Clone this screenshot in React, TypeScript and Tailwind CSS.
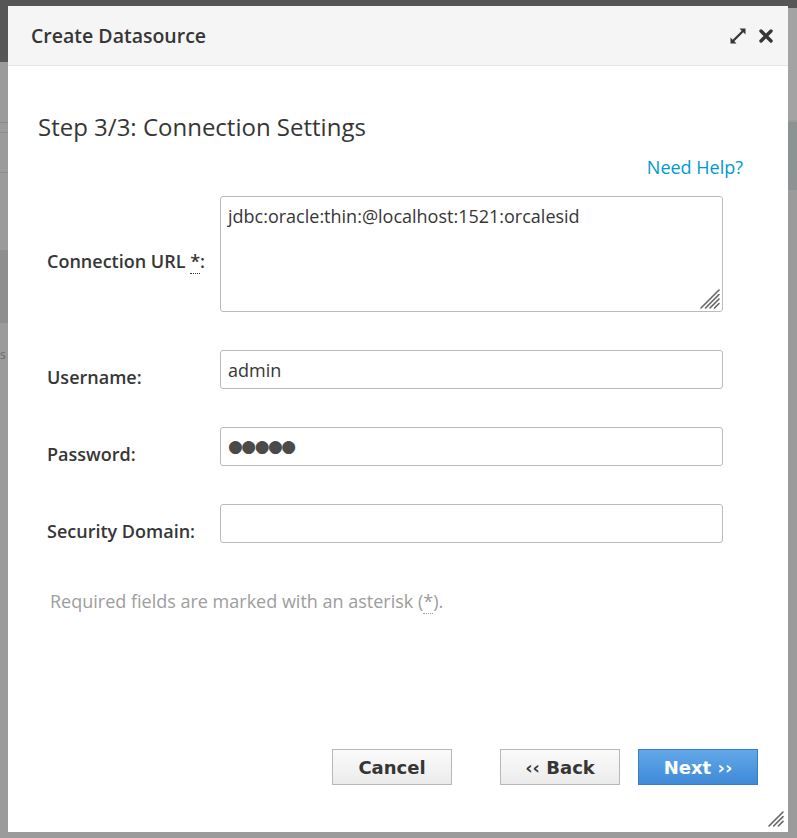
import React from "react";

const FONT = { fontFamily: '"Open Sans", "Liberation Sans", sans-serif' };
const BTN_FONT = { fontFamily: '"DejaVu Sans", Verdana, sans-serif' };

function ExpandIcon() {
  return (
    <svg width="18" height="18" viewBox="0 0 18 18" fill="#363636">
      <path d="M10.5 1.5 H16.5 V7.5 L14.3 5.3 L5.3 14.3 L7.5 16.5 H1.5 V10.5 L3.7 12.7 L12.7 3.7 Z" />
    </svg>
  );
}

function CloseIcon() {
  return (
    <svg width="14" height="14" viewBox="0 0 14 14">
      <path d="M2 2 L12 12 M12 2 L2 12" stroke="#363636" strokeWidth="3.4" strokeLinecap="round" />
    </svg>
  );
}

// diagonal resize grip, lines from bottom edge to right edge
function Grip({ n = 4, size = 20 }: { n?: number; size?: number }) {
  const step = (size - 4) / n;
  const lines = [];
  for (let i = 0; i < n; i++) {
    const o = 2 + i * step;
    lines.push(<path key={i} d={`M${o} ${size - 2} L${size - 2} ${o}`} />);
  }
  return (
    <svg width={size} height={size} viewBox={`0 0 ${size} ${size}`} stroke="#666666" strokeWidth="1.6" strokeLinecap="round" fill="none">
      {lines}
    </svg>
  );
}

function Row({ label, required, children }: { label: string; required?: boolean; children: React.ReactNode }) {
  return (
    <div className="flex items-center">
      <label className="w-[173px] pt-[14px] text-[18px] leading-[24px] font-semibold text-[#363636]">
        {label}
        {required && (
          <>
            {" "}
            <span className="border-b border-dotted border-[#363636] leading-none">*</span>
          </>
        )}
        :
      </label>
      {children}
    </div>
  );
}

const inputCls =
  "w-[503px] h-[39px] rounded-[3px] border border-[#bbbbbb] bg-white px-[7px] text-[18px] text-[#363636] outline-none";

export default function App() {
  return (
    <div className="relative w-[797px] h-[838px] overflow-hidden bg-[#9b9b9b]" style={FONT}>
      {/* dimmed page behind the dialog */}
      <div className="absolute left-0 top-0 h-[62px] w-full bg-[#565656]" />
      <div className="absolute left-0 top-[122px] h-[1px] w-[8px] bg-[#8a8a8a]" />
      <div className="absolute left-0 top-[132px] h-[1px] w-[8px] bg-[#8f8f8f]" />
      <div className="absolute left-0 top-[172px] h-[1px] w-[8px] bg-[#8f8f8f]" />
      <div className="absolute left-0 top-[250px] h-[73px] w-[8px] bg-[#8e8e8e]" />
      <div className="absolute left-0 top-[347px] text-[12px] leading-[16px] text-[#6a6a6a]">s</div>
      <div className="absolute right-0 top-[8px] h-[112px] w-[9px] bg-[#a3a3a3]" />
      <div className="absolute right-0 top-[122px] h-[68px] w-[9px] bg-[#8d9393]" />

      {/* dialog */}
      <div className="relative ml-[8px] mt-[6px] flex h-[826px] w-[780px] flex-col bg-white">
        <div className="flex h-[60px] items-center justify-between border-b border-[#e6e6e6] bg-[#f5f5f5] pl-[23px] pr-[15px]">
          <h1 className="text-[19.5px] font-semibold text-[#363636]">Create Datasource</h1>
          <div className="flex items-center gap-[12px]">
            <ExpandIcon />
            <CloseIcon />
          </div>
        </div>

        <div className="flex flex-1 flex-col">
          <h2 className="ml-[30px] mt-[45px] text-[24px] leading-[32px] text-[#363636]">
            Step 3/3: Connection Settings
          </h2>
          <div className="mr-[45px] mt-[12px] self-end text-[18px] leading-[24px] text-[#0099d3]">Need Help?</div>

          <div className="ml-[39px] mt-[17px] flex flex-col gap-[38px]">
            <Row label="Connection URL" required>
              <div className="relative">
                <textarea
                  className="block h-[116px] w-[503px] resize-none rounded-[3px] border border-[#bbbbbb] px-[7px] py-[6px] text-[18px] leading-[26px] text-[#363636] outline-none"
                  defaultValue="jdbc:oracle:thin:@localhost:1521:orcalesid"
                />
                <div className="absolute bottom-[2px] right-[2px]">
                  <Grip n={4} size={22} />
                </div>
              </div>
            </Row>
            <Row label="Username">
              <input className={inputCls} defaultValue="admin" />
            </Row>
            <Row label="Password">
              <div className={inputCls + " flex items-center"}>
                <span className="text-[17px] tracking-[-1.5px] text-[#4a4a4a]" style={{ fontFamily: '"DejaVu Sans", sans-serif' }}>
                  ●●●●●
                </span>
              </div>
            </Row>
            <Row label="Security Domain">
              <input className={inputCls} defaultValue="" />
            </Row>
          </div>

          <p className="ml-[42px] mt-[46px] text-[18px] leading-[24px] text-[#9d9d9d]">
            Required fields are marked with an asterisk (<span className="border-b border-dotted border-[#9d9d9d] leading-none">*</span>).
          </p>

          <div className="mt-auto mb-[47px] mr-[30px] flex justify-end" style={BTN_FONT}>
            <button className="h-[36px] w-[120px] border border-[#b8b8b8] bg-gradient-to-b from-[#fbfbfb] to-[#ebebeb] text-[18px] font-bold text-[#363636]">
              Cancel
            </button>
            <button className="ml-[48px] h-[36px] w-[120px] border border-[#b8b8b8] bg-gradient-to-b from-[#fbfbfb] to-[#ebebeb] text-[18px] font-bold text-[#363636]">
              ‹‹ Back
            </button>
            <button className="ml-[18px] h-[36px] w-[120px] border border-[#3a7cc1] bg-gradient-to-b from-[#62a8e8] to-[#3f8ad8] text-[18px] font-bold text-white">
              Next ››
            </button>
          </div>
        </div>

        <div className="absolute bottom-[4px] right-[3px]">
          <Grip n={3} size={18} />
        </div>
      </div>
    </div>
  );
}
